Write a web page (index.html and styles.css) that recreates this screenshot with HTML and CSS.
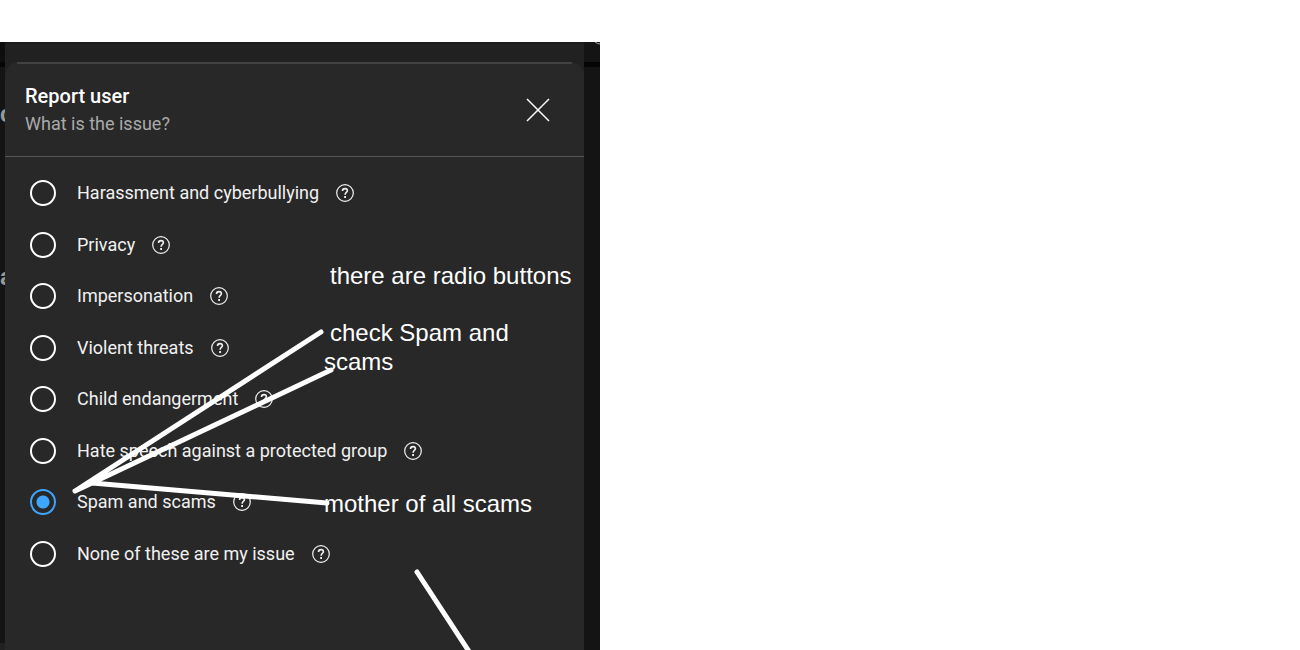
FILE: index.html
```html
<!DOCTYPE html>
<html lang="en">
<head>
<meta charset="utf-8">
<title>Report user</title>
<link rel="stylesheet" href="styles.css">
</head>
<body>
<svg class="symbols" aria-hidden="true">
  <symbol id="help" viewBox="0 0 18 18">
    <circle cx="9" cy="9" r="8.3" fill="none" stroke="currentColor" stroke-width="1.2"/>
    <path d="M6.5 7.1C6.5 5.5 7.6 4.6 9 4.6s2.4.8 2.4 2.2c0 1.6-2.3 1.8-2.3 3.9" fill="none" stroke="currentColor" stroke-width="1.6"/>
    <path d="M8.2 12.1h1.8v1.8H8.2z" fill="currentColor"/>
  </symbol>
</svg>
<main class="shot">
  <div class="edge edge-left">
    <span class="behind behind-first">c</span>
    <span class="behind behind-second">a</span>
  </div>
  <div class="center">
    <form class="dialog">
      <header class="header">
        <div>
          <h1 class="title">Report user</h1>
          <p class="subtitle">What is the issue?</p>
        </div>
        <button class="close" type="button" aria-label="Close">
          <svg width="24" height="24" viewBox="0 0 24 24"><path d="M1 1l22 22M23 1L1 23" fill="none" stroke="currentColor" stroke-width="1.5"/></svg>
        </button>
      </header>
      <div class="options" role="radiogroup" aria-label="What is the issue?">
        <div class="option"><input class="radio" type="radio" name="issue" id="o1"><label class="label" for="o1">Harassment and cyberbullying</label><button class="help" type="button" aria-label="Help"><svg width="18" height="18"><use href="#help"/></svg></button></div>
        <div class="option"><input class="radio" type="radio" name="issue" id="o2"><label class="label" for="o2">Privacy</label><button class="help" type="button" aria-label="Help"><svg width="18" height="18"><use href="#help"/></svg></button></div>
        <div class="option"><input class="radio" type="radio" name="issue" id="o3"><label class="label" for="o3">Impersonation</label><button class="help" type="button" aria-label="Help"><svg width="18" height="18"><use href="#help"/></svg></button></div>
        <div class="option"><input class="radio" type="radio" name="issue" id="o4"><label class="label" for="o4">Violent threats</label><button class="help" type="button" aria-label="Help"><svg width="18" height="18"><use href="#help"/></svg></button></div>
        <div class="option"><input class="radio" type="radio" name="issue" id="o5"><label class="label" for="o5">Child endangerment</label><button class="help" type="button" aria-label="Help"><svg width="18" height="18"><use href="#help"/></svg></button></div>
        <div class="option"><input class="radio" type="radio" name="issue" id="o6"><label class="label" for="o6">Hate speech against a protected group</label><button class="help" type="button" aria-label="Help"><svg width="18" height="18"><use href="#help"/></svg></button></div>
        <div class="option"><input class="radio" type="radio" name="issue" id="o7" checked><label class="label" for="o7">Spam and scams</label><button class="help" type="button" aria-label="Help"><svg width="18" height="18"><use href="#help"/></svg></button></div>
        <div class="option"><input class="radio" type="radio" name="issue" id="o8"><label class="label" for="o8">None of these are my issue</label><button class="help" type="button" aria-label="Help"><svg width="18" height="18"><use href="#help"/></svg></button></div>
      </div>
    </form>
  </div>
  <div class="edge edge-right"></div>
  <svg class="marks" width="600" height="608" viewBox="0 0 600 608" aria-hidden="true">
    <path d="M75 449L321 290M75 449L92 441L331 328M92 441L327 461M417 530L470 611"/>
    <path class="corner" d="M595 0q2 2 5 2"/>
  </svg>
  <p class="note note-radios">there are radio buttons</p>
  <p class="note note-check">check Spam and<br>scams</p>
  <p class="note note-mother">mother of all scams</p>
</main>
</body>
</html>
```
FILE: styles.css
```css
body {
  margin: 0;
  padding-top: 42px;
  background: #fff;
  font-family: Roboto, sans-serif;
}

.symbols {
  position: absolute;
  width: 0;
  height: 0;
}

.shot {
  position: relative;
  display: flex;
  box-sizing: border-box;
  max-width: 600px;
  min-height: calc(100vh - 42px);
  overflow: hidden;
  background: #212121;
}

.edge {
  flex: none;
  background: linear-gradient(#0e0e0e 20px, #050505 20px, #050505 25px, #141414 25px);
}

.edge-left {
  display: flex;
  flex-direction: column;
  width: 5px;
  margin-bottom: 7px;
  overflow: hidden;
}

.edge-right {
  width: 16px;
  background: linear-gradient(#141414 20px, #050505 20px, #050505 25px, #141414 25px);
}

.behind {
  align-self: flex-start;
  color: #999;
  font-size: 24px;
  font-weight: 700;
  line-height: 28px;
}

.behind-first {
  margin-top: 58px;
}

.behind-second {
  margin-top: 135px;
}

.center {
  display: flex;
  flex: 1;
  padding-top: 20px;
  background: linear-gradient(#1a1a1a, #212121 3px);
}

.dialog {
  flex: 1;
  background: linear-gradient(#414242, #414242) 12px 0 / calc(100% - 24px) 2px no-repeat #282828;
  border-radius: 14px 14px 0 0;
}

.header {
  display: flex;
  justify-content: space-between;
  padding: 20px 32px 19px 20px;
  border-bottom: 1px solid #555756;
}

.title {
  margin: 0;
  color: #fff;
  font-size: 20px;
  font-weight: 500;
  line-height: 28px;
}

.subtitle {
  margin: 0;
  color: #aaa;
  font-size: 18px;
  line-height: 27px;
}

.close {
  display: flex;
  align-self: center;
  padding: 2px;
  border: 0;
  background: none;
  color: #fff;
}

.options {
  padding: 10px 0 20px 25px;
}

.option {
  display: flex;
  align-items: center;
  height: 52px;
}

.option:nth-child(even) {
  height: 51px;
}

.radio {
  appearance: none;
  box-sizing: border-box;
  width: 26px;
  height: 26px;
  margin: 0 21px 0 0;
  border: 2px solid #fff;
  border-radius: 50%;
}

.radio:checked {
  border-color: #3ea6ff;
  background: radial-gradient(circle, #3ea6ff 6px, transparent 7px);
}

.label {
  color: #f1f1f1;
  font-size: 18px;
  line-height: 26px;
}

.help {
  display: flex;
  margin-left: 17px;
  padding: 0;
  border: 0;
  background: none;
  color: #f1f1f1;
}

.marks {
  position: absolute;
  top: 0;
  left: 0;
  fill: none;
  stroke: #fff;
  stroke-width: 5;
  stroke-linecap: round;
  stroke-linejoin: round;
  pointer-events: none;
}

.corner {
  stroke: #aaa;
  stroke-width: 1;
}

.note {
  position: absolute;
  margin: 0;
  color: #fff;
  font-family: "Liberation Sans", Arial, sans-serif;
  font-size: 24px;
  line-height: 29px;
  white-space: nowrap;
  pointer-events: none;
}

.note-radios {
  top: 219px;
  left: 330px;
}

.note-check {
  top: 276px;
  left: 324px;
  text-indent: 6px;
}

.note-mother {
  top: 447px;
  left: 324px;
}
```
